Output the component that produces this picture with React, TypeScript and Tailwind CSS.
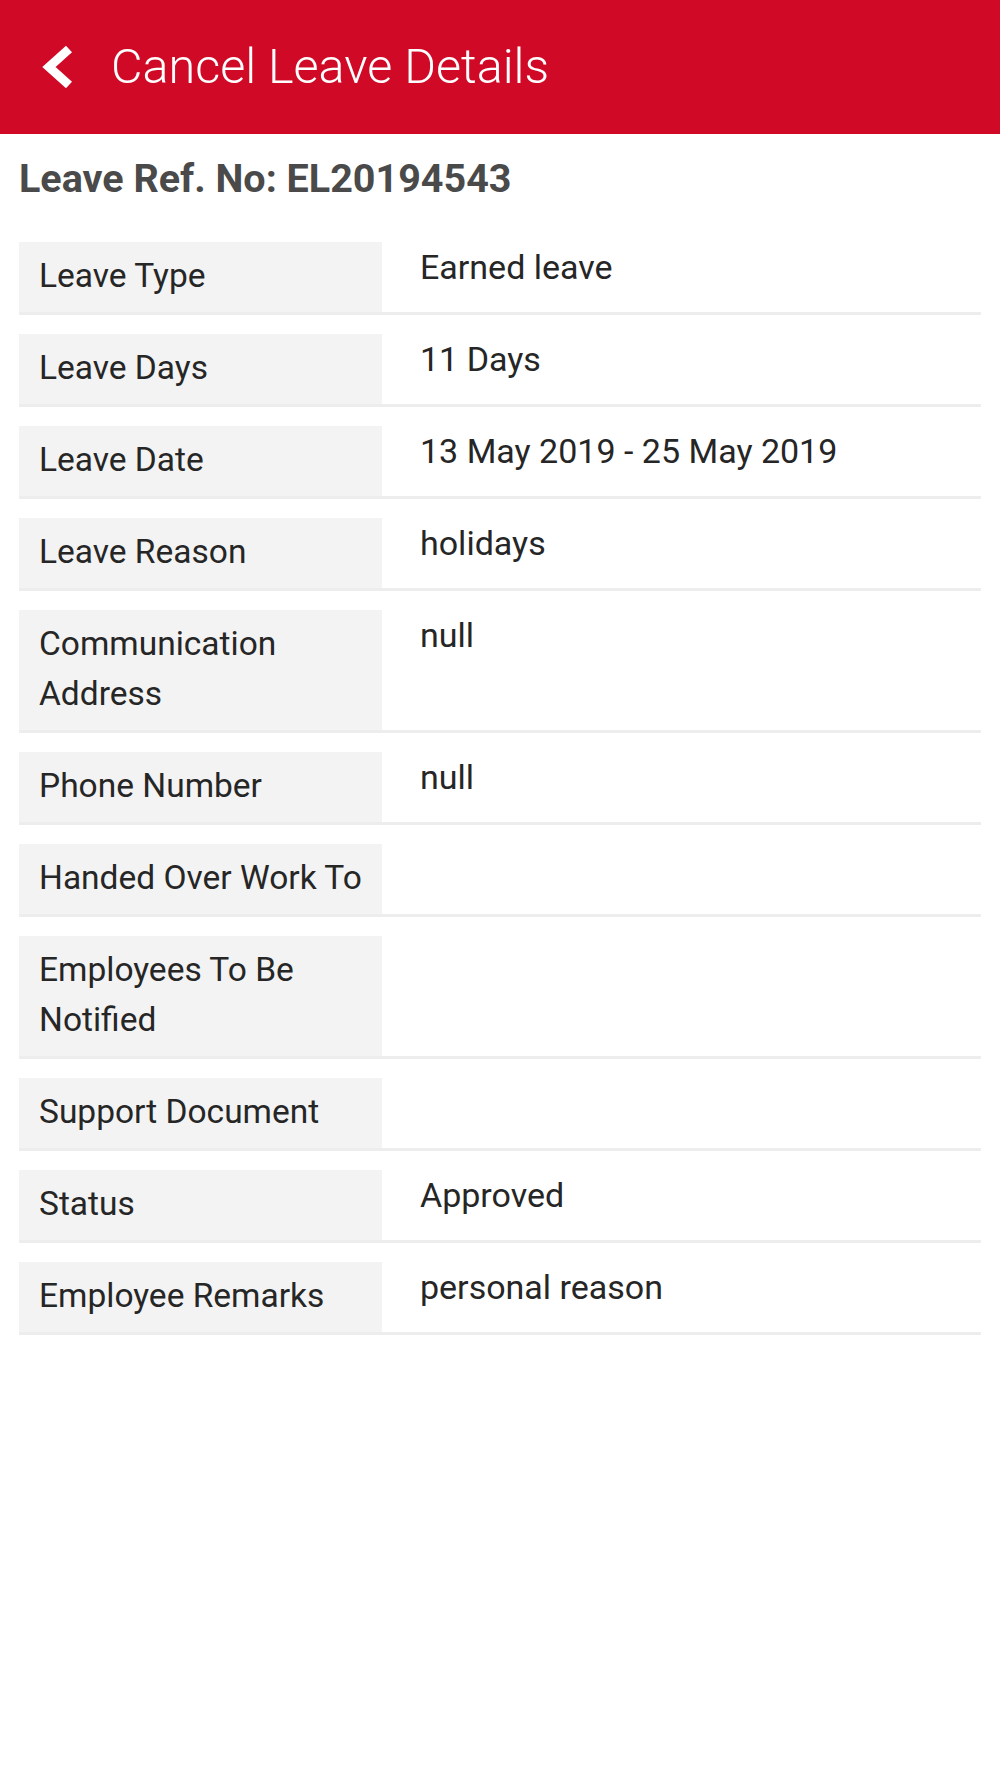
import React from 'react';

type Detail = {
  label: string;
  value?: string;
};

const details: Detail[] = [
  { label: 'Leave Type', value: 'Earned leave' },
  { label: 'Leave Days', value: '11 Days' },
  { label: 'Leave Date', value: '13 May 2019 - 25 May 2019' },
  { label: 'Leave Reason', value: 'holidays' },
  { label: 'Communication Address', value: 'null' },
  { label: 'Phone Number', value: 'null' },
  { label: 'Handed Over Work To' },
  { label: 'Employees To Be Notified' },
  { label: 'Support Document' },
  { label: 'Status', value: 'Approved' },
  { label: 'Employee Remarks', value: 'personal reason' },
];

function BackIcon() {
  return (
    <svg width="34" height="46" viewBox="0 0 34 46" fill="none" aria-hidden="true">
      <polyline
        points="29,5 9,23 29,41"
        stroke="#ffffff"
        strokeWidth="9"
        strokeLinejoin="miter"
        strokeLinecap="butt"
      />
    </svg>
  );
}

function DetailRow({ label, value }: Detail) {
  return (
    <div className="flex border-b-[3px] border-[#ededed] mb-[19px]">
      <div className="w-[363px] shrink-0 bg-[#f3f3f3] pl-[20px] pr-[12px] pt-[9px] pb-[11px] text-[33.5px] leading-[50px] text-[#262626]">
        {label}
      </div>
      <div className="flex-1 pl-[38px] pr-4 text-[34px] leading-[50px] text-[#262626]">
        {value ?? ''}
      </div>
    </div>
  );
}

export default function App() {
  return (
    <div className="min-h-[1778px] bg-white font-['Roboto',_'Noto_Sans',_sans-serif]">
      <header className="h-[134px] bg-[#d00a26] flex items-center pl-[40px]">
        <BackIcon />
        <h1 className="ml-[37px] text-[48.5px] font-light text-white leading-none">
          Cancel Leave Details
        </h1>
      </header>

      <div className="px-[19px]">
        <h2 className="mt-[22px] mb-[40px] text-[39.5px] leading-[46px] font-bold text-[#4a4a4a]">
          Leave Ref. No: EL20194543
        </h2>

        <div>
          {details.map((d) => (
            <DetailRow key={d.label} label={d.label} value={d.value} />
          ))}
        </div>
      </div>
    </div>
  );
}
